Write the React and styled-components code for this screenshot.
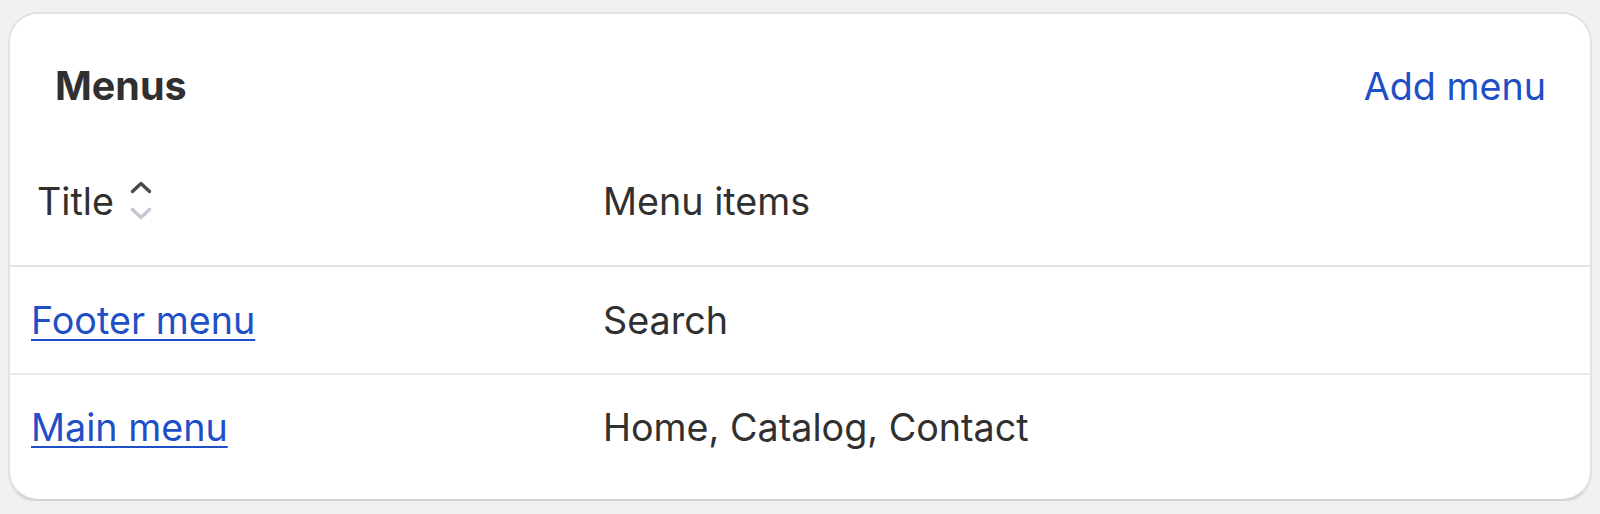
import React from "react";
import styled, { createGlobalStyle } from "styled-components";

const Global = createGlobalStyle`
  html, body { margin: 0; padding: 0; background: #f1f1f1; }
  body { font-family: Inter, "Noto Sans", Arial, sans-serif; color: #303030; }
`;

const Card = styled.section`
  margin: 12px 8px 0 8px;
  background: #ffffff;
  border: 2px solid #e2e2e4;
  border-bottom-color: #d4d4d8;
  border-radius: 30px;
  box-shadow: 0 2px 1px rgba(0, 0, 0, 0.06);
  overflow: hidden;
`;

const HeaderBar = styled.div`
  display: flex;
  justify-content: space-between;
  align-items: center;
  padding: 48px 44px 0 45px;
  line-height: 48px;
`;

const Heading = styled.h2`
  margin: 0;
  font-size: 39.5px;
  font-weight: 650;
  color: #303030;
`;

const ActionLink = styled.a`
  font-size: 37.7px;
  font-weight: 400;
  color: #1f4fc7;
  text-decoration: none;
`;

const Row = styled.div`
  display: grid;
  grid-template-columns: 593px 1fr;
  align-items: center;
  line-height: 44px;
  font-size: 37.7px;
  padding: ${(p) => p.$pad};
  border-bottom: ${(p) => (p.$divider ? `2px solid ${p.$divider}` : "none")};
`;

const Cell = styled.div`
  display: flex;
  align-items: center;
  gap: 14px;
  padding-left: ${(p) => p.$indent || 0}px;
  color: #303030;
`;

const TitleLink = styled.a`
  color: #1f4fc7;
  text-decoration: underline;
  text-decoration-thickness: 2px;
  text-underline-offset: 5px;
`;

const SortIcon = () => (
  <svg width="26" height="44" viewBox="0 0 26 44" fill="none">
    <polyline
      points="4.5,12.5 13,4.5 21.5,12.5"
      stroke="#4a4a4a"
      strokeWidth="3.4"
      strokeLinecap="round"
      strokeLinejoin="round"
    />
    <polyline
      points="4.5,30.5 13,38.5 21.5,30.5"
      stroke="#c4c8d3"
      strokeWidth="3.6"
      strokeLinecap="round"
      strokeLinejoin="round"
    />
  </svg>
);

const menus = [
  { title: "Footer menu", items: "Search" },
  { title: "Main menu", items: "Home, Catalog, Contact" },
];

export default function App() {
  return (
    <>
      <Global />
      <Card>
        <HeaderBar>
          <Heading>Menus</Heading>
          <ActionLink href="#">Add menu</ActionLink>
        </HeaderBar>
        <Row $pad="69px 0 42px" $divider="#e3e3e5">
          <Cell $indent={27}>
            Title
            <SortIcon />
          </Cell>
          <Cell>Menu items</Cell>
        </Row>
        {menus.map((m, i) => (
          <Row
            key={m.title}
            $pad={i === menus.length - 1 ? "30px 0 50px" : "31px 0 31px"}
            $divider={i === menus.length - 1 ? null : "#ebebeb"}
          >
            <Cell $indent={21}>
              <TitleLink href="#">{m.title}</TitleLink>
            </Cell>
            <Cell>{m.items}</Cell>
          </Row>
        ))}
      </Card>
    </>
  );
}
